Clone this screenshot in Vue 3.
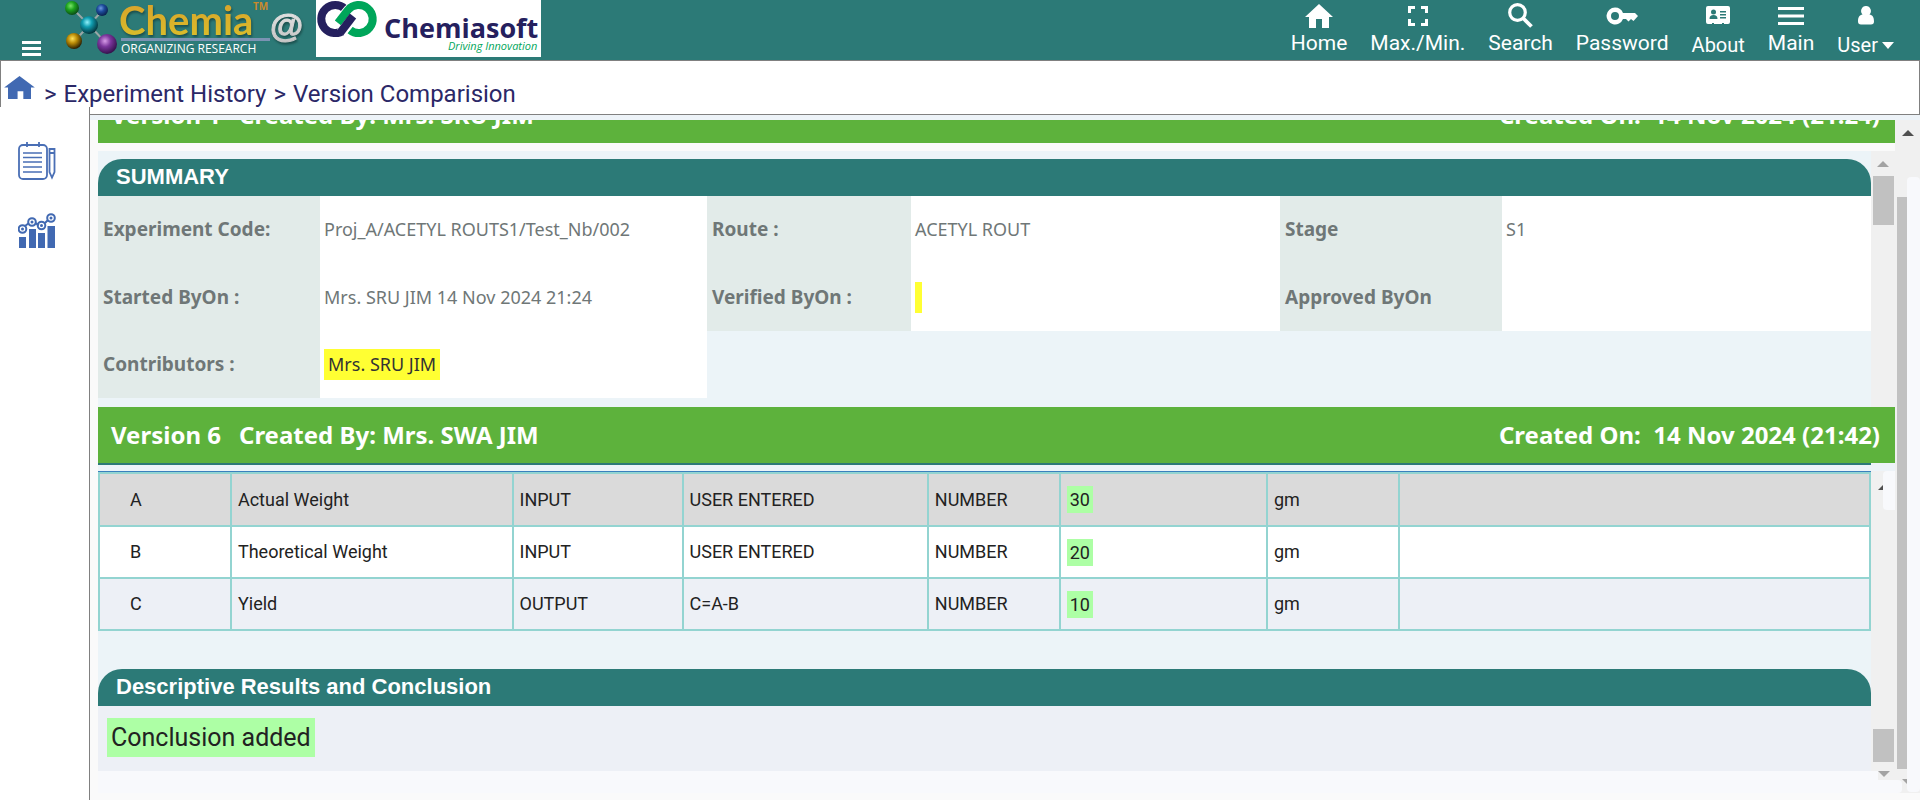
<script setup>
const nav = [
  { label: 'Home', icon: 'home' },
  { label: 'Max./Min.', icon: 'expand' },
  { label: 'Search', icon: 'search' },
  { label: 'Password', icon: 'key' },
  { label: 'About', icon: 'card', low: true },
  { label: 'Main', icon: 'menu' },
  { label: 'User', icon: 'user', low: true, caret: true },
]

const rows = [
  { id: 'A', name: 'Actual Weight', kind: 'INPUT', source: 'USER ENTERED', type: 'NUMBER', value: '30', unit: 'gm' },
  { id: 'B', name: 'Theoretical Weight', kind: 'INPUT', source: 'USER ENTERED', type: 'NUMBER', value: '20', unit: 'gm' },
  { id: 'C', name: 'Yield', kind: 'OUTPUT', source: 'C=A-B', type: 'NUMBER', value: '10', unit: 'gm' },
]
</script>

<template>
  <div class="app">
    <header class="topbar">
      <button class="burger" type="button" aria-label="Toggle menu"><i></i><i></i><i></i></button>
      <svg class="chemia" width="246" height="60" viewBox="0 0 246 60" role="img" aria-label="Chemia Organizing Research">
        <defs>
          <radialGradient id="mg" cx=".4" cy=".35" r=".65"><stop offset="0" stop-color="#7be36a" /><stop offset=".45" stop-color="#1ea51e" /><stop offset="1" stop-color="#0a4d16" /></radialGradient>
          <radialGradient id="mb" cx=".4" cy=".35" r=".65"><stop offset="0" stop-color="#6f9be0" /><stop offset=".45" stop-color="#1d4c9c" /><stop offset="1" stop-color="#0a2250" /></radialGradient>
          <radialGradient id="mc" cx=".4" cy=".35" r=".65"><stop offset="0" stop-color="#8ff0fa" /><stop offset=".4" stop-color="#0f9db0" /><stop offset="1" stop-color="#04343c" /></radialGradient>
          <radialGradient id="my" cx=".4" cy=".35" r=".65"><stop offset="0" stop-color="#ffe25a" /><stop offset=".45" stop-color="#b98a06" /><stop offset="1" stop-color="#2c2002" /></radialGradient>
          <radialGradient id="mp" cx=".4" cy=".35" r=".65"><stop offset="0" stop-color="#d79be8" /><stop offset=".45" stop-color="#7a359b" /><stop offset="1" stop-color="#35124c" /></radialGradient>
          <linearGradient id="gold" x1="0" y1="0" x2="0" y2="1"><stop offset="0" stop-color="#d99e2b" /><stop offset="1" stop-color="#d9c22b" /></linearGradient>
          <linearGradient id="silver" x1="0" y1="0" x2="0" y2="1"><stop offset="0" stop-color="#e6e6e6" /><stop offset="1" stop-color="#c4c4c4" /></linearGradient>
        </defs>
        <path d="M11 8 28 25 13 42M41 11 28 25 46 44" stroke="#9aa6a6" stroke-width="2" fill="none" />
        <circle cx="11" cy="8" r="7" fill="url(#mg)" /><circle cx="41" cy="10" r="6" fill="url(#mb)" />
        <circle cx="28" cy="25" r="9" fill="url(#mc)" /><circle cx="13" cy="41" r="8" fill="url(#my)" />
        <circle cx="46" cy="44" r="10" fill="url(#mp)" />
        <text x="58" y="35" class="t-chemia" fill="url(#gold)">Chemia</text>
        <text x="192" y="10" class="t-tm">TM</text>
        <rect x="60" y="38" width="149" height="3" fill="#7b93b3" />
        <text x="60" y="53" class="t-org">ORGANIZING RESEARCH</text>
        <text x="209" y="37" class="t-at" fill="url(#silver)" stroke="url(#silver)">@</text>
      </svg>
      <svg class="soft" width="225" height="57" viewBox="0 0 225 57" role="img" aria-label="Chemiasoft Driving Innovation">
        <rect width="225" height="57" fill="#fff" />
        <g fill="none" stroke-width="8">
          <path d="M29 9A14 14 0 1 0 28 30L32 26" stroke="#25205e" />
          <path d="M22 23 33 10A14 14 0 1 1 34 30" stroke="#fff" stroke-width="11" />
          <path d="M22 23 32 10A14 14 0 1 1 34 30" stroke="#00a65a" />
          <path d="M25 33 39 16" stroke="#fff" stroke-width="10" />
          <path d="M24 33 37 16" stroke="#25205e" />
        </g>
        <text x="68" y="38" class="t-soft">Chemiasoft</text>
        <text x="132" y="50" class="t-drive">Driving Innovation</text>
      </svg>
      <nav class="nav">
        <a v-for="n in nav" :key="n.label" href="#" class="nav-item" :class="{ low: n.low }">
          <span class="nav-icon">
            <svg v-if="n.icon === 'home'" width="28" height="24" viewBox="0 0 28 24"><path d="M14 0 28 13H24V24H17V15H11V24H4V13H0Z" fill="#fff" /></svg>
            <svg v-else-if="n.icon === 'expand'" width="20" height="20" viewBox="0 0 20 20"><path d="M1.500 7V1.500H7M13 1.500H18.500V7M18.500 13V18.500H13M7 18.500H1.500V13" stroke="#fff" stroke-width="3" fill="none" /></svg>
            <svg v-else-if="n.icon === 'search'" width="25" height="25" viewBox="0 0 25 25"><circle cx="9.500" cy="9.500" r="7.800" stroke="#fff" stroke-width="3.200" fill="none" /><path d="M15 15 23.500 23.500" stroke="#fff" stroke-width="3.800" /></svg>
            <svg v-else-if="n.icon === 'key'" width="32" height="18" viewBox="0 0 32 18"><path fill-rule="evenodd" fill="#fff" d="M9 0.500A8.500 8.500 0 0 1 17 6H29L32 9 27.500 14 25 12 22.500 14.500 20 12H17A8.500 8.500 0 1 1 9 .500ZM9 5A4 4 0 1 0 9 13 4 4 0 0 0 9 5Z" /></svg>
            <svg v-else-if="n.icon === 'card'" width="24" height="19" viewBox="0 0 24 19"><path fill="#fff" d="M2 0H22A2 2 0 0 1 24 2V16A2 2 0 0 1 22 18H18V17H16V18H8V17H6V18H2A2 2 0 0 1 0 16V2A2 2 0 0 1 2 0Z" /><circle cx="7.500" cy="6" r="2.500" fill="#2c7a77" /><path d="M3.500 13C3.500 10 5 9 7.500 9S11.500 10 11.500 13ZM14 5H20V6.500H14ZM14 8H20V9.500H14ZM14 11H20V12.500H14Z" fill="#2c7a77" /></svg>
            <svg v-else-if="n.icon === 'menu'" width="26" height="18" viewBox="0 0 26 18"><path d="M0 1.500H26M0 9H26M0 16.500H26" stroke="#fff" stroke-width="3" /></svg>
            <svg v-else width="16" height="19" viewBox="0 0 16 19"><path d="M8 0A4.800 5 0 0 1 11.500 8.500C14.500 9 16 11 16 15.500 16 17.500 15 18.500 13 18.500H3C1 18.500 0 17.500 0 15.500 0 11 1.500 9 4.500 8.500A4.800 5 0 0 1 8 0Z" fill="#fff" /></svg>
          </span>
          <span class="nav-label">{{ n.label }}<svg v-if="n.caret" class="caret" width="12" height="7" viewBox="0 0 12 7"><path d="M0 0H12L6 7Z" fill="#fff" /></svg></span>
        </a>
      </nav>
    </header>

    <nav class="crumbs" aria-label="Breadcrumb">
      <a href="#" class="crumb-home" aria-label="Home">
        <svg width="31" height="23" viewBox="0 0 32 24"><path d="M16 0 32 12H28V24H20V16H14V24H4V12H0Z" fill="#4169b2" /></svg>
      </a>
      <span>&gt;</span><a href="#">Experiment History</a><span>&gt;</span><span>Version Comparision</span>
    </nav>

    <div class="workspace">
      <aside class="side">
        <a href="#" aria-label="Notebook">
          <svg width="38" height="38" viewBox="0 0 38 38" fill="none" stroke="#4a6fb5">
            <rect x="1" y="3" width="28" height="34" rx="4" stroke-width="1.800" />
            <path d="M9 0V5M21 0V5" stroke-width="1.800" />
            <path d="M5 11H24M5 15.500H24M5 20H24M5 25H24M5 30H24" stroke-width="1.500" />
            <path d="M31.500 7H36.500V30L34 35.500 31.500 30ZM31.500 11H36.500" stroke-width="1.800" />
          </svg>
        </a>
        <a href="#" aria-label="Charts">
          <svg width="38" height="35" viewBox="0 0 38 35" fill="none" stroke="#4169b2">
            <path d="M1 24H8V35H1ZM11 16H18V35H11ZM20 20H27V35H20ZM29.500 13H37V35H29.500Z" fill="#4169b2" stroke="none" />
            <path d="M7 13 11 10M17 10 21 12M27 10 30 7" stroke-width="2" />
            <circle cx="4.500" cy="16" r="3.800" stroke-width="2" /><circle cx="14" cy="9" r="3.800" stroke-width="2" />
            <circle cx="23.500" cy="12.500" r="3.800" stroke-width="2" /><circle cx="33" cy="5" r="3.800" stroke-width="2" />
            <g fill="#4169b2" stroke="none"><circle cx="4.500" cy="16" r="1.500" /><circle cx="14" cy="9" r="1.500" /><circle cx="23.500" cy="12.500" r="1.500" /><circle cx="33" cy="5" r="1.500" /></g>
          </svg>
        </a>
      </aside>

      <main class="main">
        <div class="frame">
          <div class="versions">
            <div class="clip">
              <h2 class="version"><span>Version 1</span><span class="by">Created By: Mrs. SRU JIM</span><span>Created On:&nbsp; 14 Nov 2024 (21:24)</span></h2>
            </div>

            <section class="pane first">
              <div class="pane-body">
                <h3 class="bar">SUMMARY</h3>
                <div class="summary">
                  <div class="label">Experiment Code:</div><div class="value">Proj_A/ACETYL ROUTS1/Test_Nb/002</div>
                  <div class="label">Route :</div><div class="value">ACETYL ROUT</div>
                  <div class="label">Stage</div><div class="value">S1</div>
                  <div class="label">Started ByOn :</div><div class="value">Mrs. SRU JIM 14 Nov 2024 21:24</div>
                  <div class="label">Verified ByOn :</div><div class="value"><mark class="yellow"></mark></div>
                  <div class="label">Approved ByOn</div><div class="value"></div>
                  <div class="label">Contributors :</div><div class="value"><mark class="yellow">Mrs. SRU JIM</mark></div>
                </div>
              </div>
              <div class="scroll scroll-top" aria-hidden="true"><i class="arrow up"></i><i class="thumb"></i></div>
            </section>

            <h2 class="version"><span>Version 6</span><span class="by">Created By: Mrs. SWA JIM</span><span>Created On:&nbsp; 14 Nov 2024 (21:42)</span></h2>

            <section class="pane">
              <div class="pane-body lined">
                <table class="grid">
                  <colgroup><col class="c1"><col class="c2"><col class="c3"><col class="c4"><col class="c5"><col class="c6"><col class="c7"><col class="c8"></colgroup>
                  <tbody>
                    <tr v-for="r in rows" :key="r.id">
                      <td>{{ r.id }}</td><td>{{ r.name }}</td><td>{{ r.kind }}</td><td>{{ r.source }}</td><td>{{ r.type }}</td>
                      <td><mark class="green">{{ r.value }}</mark></td><td>{{ r.unit }}</td><td></td>
                    </tr>
                  </tbody>
                </table>
                <h3 class="bar">Descriptive Results and Conclusion</h3>
                <div class="conclusion"><mark class="green">Conclusion added</mark></div>
              </div>
              <div class="scroll scroll-bottom" aria-hidden="true"><i class="arrow half"></i><i class="veil"></i><i class="thumb"></i></div>
            </section>
            <div class="strip" aria-hidden="true"><i class="arrow down"></i></div>
          </div>
          <div class="outer" aria-hidden="true"><i class="arrow up dark"></i><i class="rail"></i><i class="sheet"></i><i class="arrow corner"></i></div>
        </div>
      </main>
    </div>
  </div>
</template>

<style>
html, body { margin: 0; background: #fff; }
</style>

<style scoped>
.app { height: 100vh; display: flex; flex-direction: column; overflow: hidden; font-family: Roboto, "Liberation Sans", sans-serif; color: #222; }
.app *, .app *::before { box-sizing: border-box; }
a { color: inherit; text-decoration: none; }
svg { display: block; flex: none; }
h2, h3 { margin: 0; }
i { display: block; }
mark { color: inherit; }

.topbar { flex: none; height: 60px; display: flex; align-items: flex-start; background: #2c7a77; }
.burger { width: 20px; margin: 41px 19px 0 22px; padding: 0; border: 0; background: none; display: flex; flex-direction: column; gap: 3px; }
.burger i { width: 19px; height: 3px; background: #fff; }
.soft { margin-left: 9px; }
.t-chemia, .t-at { filter: drop-shadow(1px 2px 1px #1b4f4d); }
.t-chemia { font: 700 40px Lato, sans-serif; }
.t-tm { font: 700 10px "Open Sans", sans-serif; fill: #c98a2c; }
.t-org { font: 400 12px "Open Sans", sans-serif; fill: #fff; }
.t-at { font: 700 34px "Liberation Sans", sans-serif; }
.t-soft { font: 700 27px "Open Sans", sans-serif; fill: #25205e; }
.t-drive { font: italic 400 11px "Open Sans", sans-serif; fill: #00a65a; }
.nav { margin-left: auto; padding-right: 26px; display: flex; gap: 23px; color: #fff; font-size: 21px; line-height: 24px; }
.nav-item { display: flex; flex-direction: column; align-items: center; }
.nav-icon { height: 31px; display: flex; align-items: center; }
.low { font-size: 20px; }
.low .nav-icon { height: 33px; padding-bottom: 3px; }
.nav-label { display: flex; align-items: center; }
.caret { margin-left: 4px; }

.crumbs { flex: none; height: 55px; padding: 12px 4px 0 3px; display: flex; align-items: center; gap: 7px; background: #fff; border: 1px solid #808080; color: #2b2867; font-size: 24px; line-height: 28px; }
.crumb-home { margin: -13px 2px 0 0; }

.workspace { flex: 1; min-height: 0; display: flex; }
.side { flex: none; width: 90px; margin-top: -8px; padding: 35px 0 0 18px; background: #fff; border-right: 1px solid #808080; display: flex; flex-direction: column; gap: 33px; position: relative; }
.main { flex: 1; min-width: 0; background: #fafafa; border-top: 5px solid #edf3f8; padding-left: 8px; }
.frame { position: relative; display: flex; }
.versions { flex: 1; min-width: 0; }
.clip { height: 23px; overflow: hidden; display: flex; align-items: flex-end; margin-bottom: 8px; }
.version { width: 100%; height: 56px; flex: none; padding: 0 15px 0 13px; display: flex; align-items: center; gap: 18px; background: #5db23c; color: #fff; font: 700 24px/30px "Noto Sans", "Open Sans", sans-serif; white-space: nowrap; }
.by { flex: 1; }
.pane { display: flex; background: #ecf4f8; }
.pane-body { flex: 1; min-width: 0; }
.first .pane-body { padding: 8px 0 9px; }
.lined { border-top: 2px solid #2c7a77; padding-top: 7px; }
.bar { height: 37px; padding: 0 18px; border-radius: 24px 24px 0 0; background: #2c7a77; color: #fff; font: 700 22px/35px "Liberation Sans", sans-serif; }

.summary { display: grid; grid-template-columns: 222fr 387fr 204fr 369fr 222fr 369fr; grid-template-rows: 67px 68px 67px; color: #6f7777; font: 400 18px/31px "Noto Sans", "Open Sans", sans-serif; }
.label, .value { display: flex; align-items: center; padding: 0 4px; white-space: nowrap; }
.label { padding-left: 5px; background: #e2ebe9; font-weight: 700; font-size: 19px; }
.value { background: #fff; }
.yellow { min-width: 7px; height: 31px; padding: 0 4px; background: #ffff33; color: #333; }
.yellow:empty { padding: 0; }

.grid { width: 100%; table-layout: fixed; border-collapse: collapse; border: 2px solid #93d4d1; box-shadow: 0 -1px #3a80bd; margin-bottom: 38px; font-size: 18px; line-height: 27px; }
.c1, .c5, .c7 { width: 7.45%; }
.c2 { width: 15.9%; }
.c3 { width: 9.6%; }
.c4 { width: 13.85%; }
.c6 { width: 11.7%; }
.grid td { height: 52px; padding: 0 6px 1px; border-left: 2px solid #93d4d1; border-bottom: 2px solid #93d4d1; }
.grid tr:nth-child(1) { background: #dadada; }
.grid tr:nth-child(1) td { height: 53px; }
.grid tr:nth-child(2) { background: #fff; }
.grid tr:nth-child(3) { background: #edf0f6; }
.grid td:first-child { padding-left: 30px; }
.green { display: inline-block; padding: 0 4px; background: #adffa5; color: #222; }
.grid .green { padding: 0 3px; vertical-align: middle; }
.conclusion { height: 65px; padding: 12px 9px 0; background: #edf0f6; font-size: 25px; line-height: 39px; }

.scroll { flex: none; width: 24px; background: #f0f0f0; display: flex; flex-direction: column; align-items: center; }
.scroll .thumb { width: 21px; background: #c1c1c1; }
.arrow { width: 12px; height: 6px; background: #a3a3a3; }
.up { clip-path: polygon(50% 0, 100% 100%, 0 100%); }
.down { clip-path: polygon(0 0, 100% 0, 50% 100%); }
.dark { background: #505050; }
.scroll-top { padding-top: 10px; }
.scroll-top .thumb { height: 49px; margin-top: 9px; }
.scroll-bottom { position: relative; border-top: 8px solid #edf3f8; }
.scroll-bottom .thumb { height: 33px; margin-top: auto; margin-bottom: 9px; }
.half { position: absolute; left: 7px; top: 14px; width: 5px; height: 5px; background: #505050; clip-path: polygon(100% 0, 100% 100%, 0 100%); }
.veil { position: absolute; right: 0; top: 0; width: 12px; height: 39px; border-radius: 4px 0 0 4px; background: #f8f9fc; }
.strip { height: 22px; border-right: 17px solid #f0f0f0; background: #f8f9fc; display: flex; justify-content: flex-end; position: relative; }
.strip::before { content: ""; position: absolute; left: 0; right: -24px; bottom: 0; height: 13px; border-radius: 0 4px 4px 0; background: #f8f9fc; z-index: 1; }
.strip .arrow { position: absolute; right: -12px; top: 0; }
.outer { flex: none; width: 25px; position: relative; background: #f0f0f0; }
.outer .up { margin: 10px 0 0 7px; }
.rail { position: absolute; left: 2px; top: 77px; bottom: 24px; width: 10px; background: #c1c1c1; }
.sheet { position: absolute; right: 0; top: 57px; bottom: 1px; width: 13px; border-radius: 4px; background: #f8f9fc; }
.corner { position: absolute; left: 7px; bottom: 9px; width: 5px; height: 5px; clip-path: polygon(0 0, 100% 0, 100% 100%); }
</style>
